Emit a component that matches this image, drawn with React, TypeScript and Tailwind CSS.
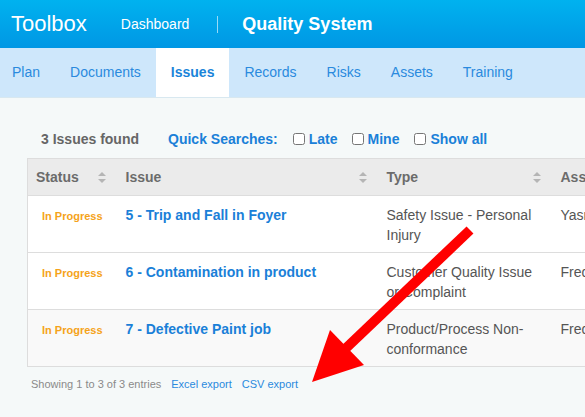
import { useState } from 'react';

interface IssueRow {
  id: number;
  title: string;
  status: string;
  type: string;
  assignee: string;
}

const rows: IssueRow[] = [
  { id: 5, title: 'Trip and Fall in Foyer', status: 'In Progress', type: 'Safety Issue - Personal Injury', assignee: 'Yasmin Hart' },
  { id: 6, title: 'Contamination in product', status: 'In Progress', type: 'Customer Quality Issue or Complaint', assignee: 'Fred Smith' },
  { id: 7, title: 'Defective Paint job', status: 'In Progress', type: 'Product/Process Non-conformance', assignee: 'Fred Smith' },
];

const tabs = ['Plan', 'Documents', 'Issues', 'Records', 'Risks', 'Assets', 'Training'];

function SortIcon() {
  return (
    <svg width="8" height="11" viewBox="0 0 8 11" className="shrink-0">
      <path d="M4 0 L8 4 L0 4 Z" fill="#b5b5b5" />
      <path d="M4 11 L8 7 L0 7 Z" fill="#b5b5b5" />
    </svg>
  );
}

function HeaderCell({ label, width, sortable = true }: { label: string; width: number; sortable?: boolean }) {
  return (
    <th className="h-[37px] p-0 text-left font-bold align-middle" style={{ width }}>
      <div className="flex items-center justify-between pl-2 pr-[12px]">
        <span>{label}</span>
        {sortable && <SortIcon />}
      </div>
    </th>
  );
}

export default function App() {
  const [filters, setFilters] = useState({ late: false, mine: false, all: false });

  return (
    <div className="relative w-[585px] h-[417px] overflow-hidden bg-[#f5f9f9] font-['Liberation_Sans',Arial,sans-serif]">
      {/* top bar */}
      <div className="h-12 flex items-center pl-[11px] bg-gradient-to-b from-[#00b2ef] to-[#0097e4] text-white">
        <span className="text-[22px] leading-none">Toolbox</span>
        <span className="ml-[34px] text-[14px]">Dashboard</span>
        <span className="ml-[28px] w-px h-[17px] bg-white/60" />
        <span className="ml-[24px] text-[18px] font-bold">Quality System</span>
      </div>

      {/* section tabs */}
      <div className="h-[50px] flex bg-[#cee7fb] border-b border-[#d8e8f0] -ml-[3px]">
        {tabs.map((t) => (
          <div
            key={t}
            className={
              t === 'Issues'
                ? 'px-[15px] flex items-center text-[14px] font-bold text-[#1a84d9] bg-white'
                : 'px-[15px] flex items-center text-[14px] text-[#2a8ade]'
            }
          >
            {t}
          </div>
        ))}
      </div>

      <div className="pl-[27px] pt-[31px]">
        {/* toolbar */}
        <div className="flex items-center h-5 pl-[14px] text-[14px] font-bold">
          <span className="text-[#666]">3 Issues found</span>
          <span className="ml-[29px] text-[#1a80d8]">Quick Searches:</span>
          <label className="ml-[15px] flex items-center gap-1 text-[#1a80d8]">
            <input
              type="checkbox"
              checked={filters.late}
              onChange={() => setFilters({ ...filters, late: !filters.late })}
              className="w-3 h-3 m-0"
            />
            Late
          </label>
          <label className="ml-[14px] flex items-center gap-1 text-[#1a80d8]">
            <input
              type="checkbox"
              checked={filters.mine}
              onChange={() => setFilters({ ...filters, mine: !filters.mine })}
              className="w-3 h-3 m-0"
            />
            Mine
          </label>
          <label className="ml-[15px] flex items-center gap-1 text-[#1a80d8]">
            <input
              type="checkbox"
              checked={filters.all}
              onChange={() => setFilters({ ...filters, all: !filters.all })}
              className="w-3 h-3 m-0"
            />
            Show all
          </label>
        </div>

        {/* issues table */}
        <table className="mt-[9px] w-[700px] table-fixed border-collapse border border-[#dddddd] text-[14px]">
          <thead>
            <tr className="bg-[#ebebeb] text-[#6b6b6b] border-b border-[#dddddd]">
              <HeaderCell label="Status" width={90} />
              <HeaderCell label="Issue" width={261} />
              <HeaderCell label="Type" width={174} />
              <HeaderCell label="Assignee" width={175} sortable={false} />
            </tr>
          </thead>
          <tbody>
            {rows.map((r, i) => (
              <tr key={r.id} className={i === 2 ? 'bg-[#f9f9f9] border-b border-[#dddddd]' : 'bg-white border-b border-[#dddddd]'}>
                <td className="h-[57px] align-top pt-[12px] pl-[14px] text-[11px] font-bold text-[#f5a31a] whitespace-nowrap">
                  {r.status}
                </td>
                <td className="align-top pt-[9px] pl-2 leading-5 font-bold text-[#1a80d8]">
                  {r.id} - {r.title}
                </td>
                <td className="align-top pt-[9px] pl-2 pr-3 leading-5 text-[#555]">{r.type}</td>
                <td className="align-top pt-[9px] pl-2 leading-5 text-[#555] whitespace-nowrap">{r.assignee}</td>
              </tr>
            ))}
          </tbody>
        </table>

        {/* footer */}
        <div className="mt-[9px] pl-1 flex gap-[10px] text-[11px]">
          <span className="text-[#8a8a8a]">Showing 1 to 3 of 3 entries</span>
          <span className="text-[#2a8ade]">Excel export</span>
          <span className="text-[#2a8ade]">CSV export</span>
        </div>
      </div>

      {/* red annotation arrow */}
      <svg className="absolute inset-0 pointer-events-none" width="585" height="417" viewBox="0 0 585 417">
        <line x1="470" y1="230" x2="343" y2="351" stroke="#ff0000" strokeWidth="10" />
        <polygon points="312,382 330,330 364,365" fill="#ff0000" />
      </svg>
    </div>
  );
}
